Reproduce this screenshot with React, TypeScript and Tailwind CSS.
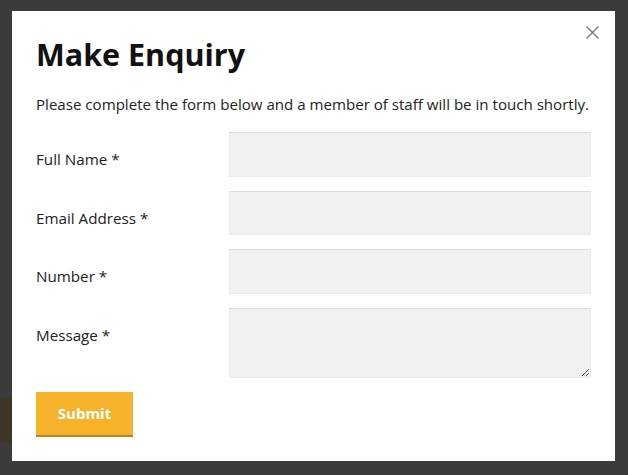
import React from 'react';

const fields = [
    { label: 'Full Name *', type: 'text' },
    { label: 'Email Address *', type: 'email' },
    { label: 'Number *', type: 'tel' },
];

const EnquiryModal = () => {
    return (
        <div className="relative w-[603px] h-[450px] bg-white px-6 pt-[23px]">
            {/* Close */}
            <button className="absolute right-[16px] top-[15px] w-[13px] h-[13px] text-[#777] cursor-pointer">
                <svg viewBox="0 0 13 13" width="13" height="13" stroke="currentColor" strokeWidth="1.4" fill="none">
                    <path d="M0.5 0.5 L12.5 12.5 M12.5 0.5 L0.5 12.5" />
                </svg>
            </button>

            <h2 className="text-[30.5px] leading-[40px] font-bold text-[#111]">Make Enquiry</h2>
            <p className="mt-[20px] text-[15.1px] leading-[20px] text-[#222] whitespace-nowrap">
                Please complete the form below and a member of staff will be in touch shortly.
            </p>

            <form className="mt-[18px] flex flex-col gap-[14px]">
                {fields.map((f) => (
                    <div key={f.label} className="grid grid-cols-[193px_1fr]">
                        <label className="pt-[17px] text-[15.2px] leading-[20px] text-[#222]">{f.label}</label>
                        <input
                            type={f.type}
                            className="h-[44.6px] bg-[#f1f1f1] border border-[#ececec] border-t-[#dcdcdc] outline-none"
                        />
                    </div>
                ))}
                <div className="grid grid-cols-[193px_1fr]">
                    <label className="pt-[17px] text-[15.2px] leading-[20px] text-[#222]">Message *</label>
                    <textarea className="h-[70px] bg-[#f1f1f1] border border-[#ececec] border-t-[#dcdcdc] outline-none resize-y" />
                </div>
                <div>
                    <button
                        type="button"
                        className="w-[97px] h-[45px] bg-[#f6b22a] border-b-2 border-[#b98418] text-white font-bold text-[15px]"
                    >
                        Submit
                    </button>
                </div>
            </form>
        </div>
    );
};

const App = () => {
    return (
        <div className="relative w-[628px] h-[475px] bg-[#3b3b3b] overflow-hidden" style={{ fontFamily: '"Open Sans", "Noto Sans", sans-serif' }}>
            {/* page behind the overlay */}
            <div className="pt-[398px]">
                <div className="w-[12px] h-[45px] bg-[#3e3627]" />
            </div>

            <div className="absolute left-[12px] top-[11px]">
                <EnquiryModal />
            </div>
        </div>
    );
};

export default App;
